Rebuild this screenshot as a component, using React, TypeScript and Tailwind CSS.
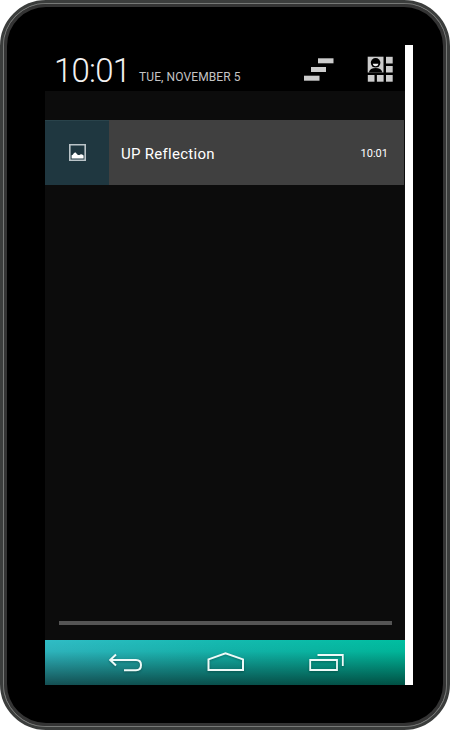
import React from "react";

function StatusHeader() {
  return (
    <header className="flex h-[46px] shrink-0 items-start bg-black text-[#f2f2f2]">
      <div className="ml-[9px] mt-[8px] h-[36px] w-[85px] whitespace-nowrap text-[33px] font-light leading-[36px] tracking-[-0.8px]">
        10:01
      </div>
      <div className="mt-[24px] w-[120px] whitespace-nowrap text-[12px] leading-[17px] tracking-[0.1px] text-[#c4c4c4]">
        TUE, NOVEMBER 5
      </div>
      <svg className="ml-[44px] mt-[12px] shrink-0" width="32" height="26" viewBox="0 0 32 26" fill="#cccccc">
        <rect x="15" y="1.3" width="15.5" height="5" />
        <rect x="8" y="10" width="15" height="5" />
        <rect x="1" y="18.7" width="15.5" height="5" />
      </svg>
      <svg className="ml-[32px] mt-[11px] shrink-0" width="27" height="27" viewBox="0 0 27 27" fill="#cccccc">
        <rect x="0.7" y="0.7" width="15.8" height="15.8" />
        <circle cx="8.6" cy="6.8" r="4.8" fill="#000" />
        <path d="M1.8 16.5c.8-3 3-4.3 6.8-4.4 3.8.1 6 1.4 6.8 4.4z" fill="#000" />
        <path d="M5.8 7.8h5.6c-.4 1.8-1.5 2.4-2.8 2.4s-2.4-.6-2.8-2.4z" fill="#f0f0f0" />
        <rect x="19" y="0.8" width="6.7" height="6.7" />
        <rect x="19" y="10" width="6.7" height="6.5" />
        <rect x="0.8" y="19" width="6.7" height="6.7" />
        <rect x="9.9" y="19" width="6.7" height="6.7" />
        <rect x="19" y="19" width="6.7" height="6.7" />
      </svg>
    </header>
  );
}

function Notification() {
  return (
    <section className="mr-px mt-[29px] flex h-[65px] shrink-0 items-center bg-[#404040] text-white">
      <div className="flex h-full w-[64px] items-center justify-center border-t border-[#29434b] bg-[#1f3740]">
        <svg width="18" height="18" viewBox="0 0 18 18">
          <path d="M1.8 .8h15.4v15.4H1.8z" fill="none" stroke="#bac4c8" strokeWidth="1.6" />
          <path d="M3.6 14.4v-3.2l1.2-.4.8-1.4 1.6-1.2 1.3 1.2 1.4 1.6 1.6.1 1.4-.8 1.3.1 1.4 1.2v2.8z" fill="#fff" />
        </svg>
      </div>
      <span className="ml-[12px] mt-[2px] whitespace-nowrap text-[15px] leading-[20px] tracking-[0.28px]">UP Reflection</span>
      <time className="ml-auto mr-[16px] mt-[2px] whitespace-nowrap text-[11px] leading-[16px]">10:01</time>
    </section>
  );
}

function NavigationBar() {
  return (
    <nav className="flex h-[45px] shrink-0 items-center bg-[linear-gradient(to_bottom,transparent_0%,rgba(0,0,0,0.05)_25%,rgba(0,0,0,0.58)_100%),linear-gradient(to_right,#30bcc5,#14bab0_50%,#00bea0)]">
      <svg width="360" height="45" viewBox="0 0 360 45" fill="none" stroke="#eefaf8" strokeWidth="2" className="drop-shadow-[0_1px_1px_rgba(0,0,0,0.3)]">
        <path d="M71 14.5L65.2 20L71 25.5M65.2 20H91C94.2 20 96 22 96 25C96 28.3 94.2 30.2 91 30.2H79" />
        <path d="M163.5 30V19.4L180.5 13.2L198 19.4V30Z" />
        <path d="M265.2 20H292V30H265.2ZM272.5 15H297.8V26" strokeWidth="1.8" />
      </svg>
    </nav>
  );
}

export default function App() {
  return (
    <div className="h-[730px] w-[450px] overflow-hidden bg-white font-[Roboto,sans-serif]">
      <div className="h-[730px] w-[450px] rounded-[46px] border-[3px] border-[#3b3d3c] bg-[#777]">
        <div className="h-full rounded-[43px] border border-[#777977] bg-[#343434]">
          <div className="h-full rounded-[42px] border-[3px] border-[#343434] bg-[#343434]">
            <div className="flex h-full rounded-[39px] bg-black pl-[38px] pt-[38px]">
              <main className="flex h-[640px] w-[360px] flex-col bg-[#0c0c0c]">
                <StatusHeader />
                <Notification />
                <div className="mb-[15px] ml-[14px] mt-auto h-[4px] w-[333px] bg-[#555]" />
                <NavigationBar />
              </main>
              <div className="h-[640px] w-[8px] bg-white" />
            </div>
          </div>
        </div>
      </div>
    </div>
  );
}
